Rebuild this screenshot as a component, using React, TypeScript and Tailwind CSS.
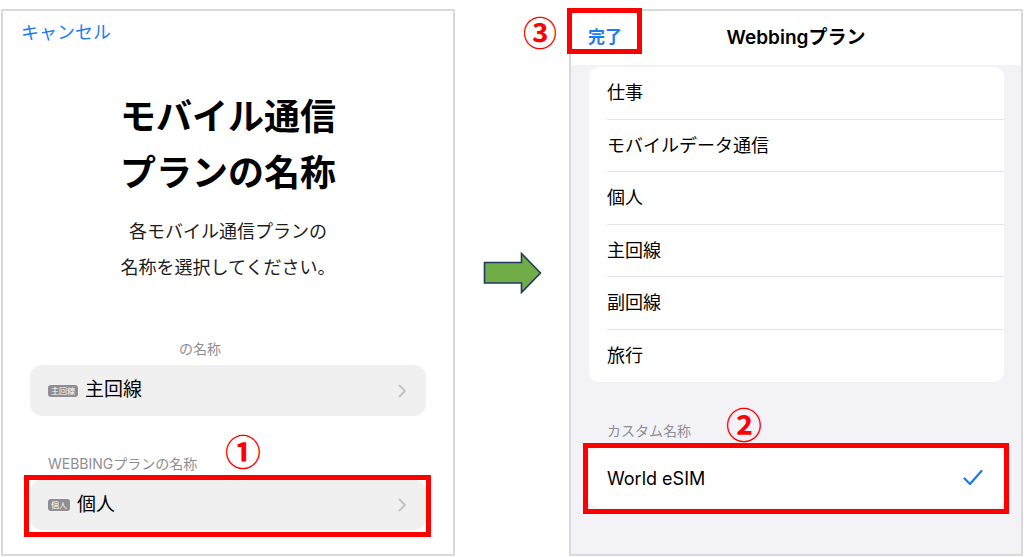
import React from "react";

const Chevron = () => (
  <svg width="9" height="14" viewBox="0 0 9 14" fill="none">
    <path d="M1.5 1.5 L7 7 L1.5 12.5" stroke="#c4c4c7" strokeWidth="2" strokeLinecap="round" strokeLinejoin="round" />
  </svg>
);

const Badge = ({ text }: { text: string }) => (
  <span className="inline-flex items-center justify-center h-[12px] px-[3px] rounded-[3px] bg-[#8e8e93] text-white text-[8px] leading-none">
    {text}
  </span>
);

const rightRows = ["仕事", "モバイルデータ通信", "個人", "主回線", "副回線", "旅行"];

export default function App() {
  return (
    <div className="relative w-[1024px] h-[557px] overflow-hidden bg-white flex pt-[9px] pl-[1px] font-['Inter','Noto_Sans_CJK_JP',sans-serif] text-black">
      {/* Left panel */}
      <div className="w-[454px] h-[547px] border-2 border-[#d9d9d9] flex flex-col bg-white">
        <div className="h-[42px] flex items-center pl-[18px] text-[18px] text-[#1b7cf4]">キャンセル</div>
        <div className="mt-[36px] text-center text-[36px] leading-[56px] font-bold">
          <div>モバイル通信</div>
          <div>プランの名称</div>
        </div>
        <div className="mt-[13px] text-center text-[18px] leading-[36px] text-[#1c1c1e]">
          <div>各モバイル通信プランの</div>
          <div>名称を選択してください。</div>
        </div>
        <div className="mt-[52px] h-[20px] flex items-center pl-[176px] text-[14px] text-[#8e8e93]">の名称</div>
        <div className="mt-[7px] mx-[27px] h-[51px] rounded-[12px] bg-[#f0f0f0] flex items-center pl-[18px] pr-[19px]">
          <Badge text="主回線" />
          <span className="ml-[7px] text-[19px]">主回線</span>
          <span className="ml-auto flex"><Chevron /></span>
        </div>
        <div className="mt-[37px] h-[20px] flex items-center pl-[45px] text-[14px] text-[#8e8e93]">WEBBINGプランの名称</div>
        <div className="mt-[7px] mx-[27px] h-[50px] rounded-[12px] bg-[#f0f0f0] flex items-center pl-[18px] pr-[19px]">
          <Badge text="個人" />
          <span className="ml-[7px] text-[19px]">個人</span>
          <span className="ml-auto flex"><Chevron /></span>
        </div>
      </div>

      {/* Arrow */}
      <div className="w-[114px] flex justify-center pt-[243px]">
        <svg width="59" height="42" viewBox="0 0 59 42">
          <polygon
            points="1.5,10.5 38.5,10.5 38.5,1.5 57.5,21 38.5,40.5 38.5,31 1.5,31"
            fill="#70ad47"
            stroke="#203864"
            strokeWidth="1.6"
            strokeLinejoin="miter"
          />
        </svg>
      </div>

      {/* Right panel */}
      <div className="w-[454px] h-[547px] border-2 border-[#d9d9d9] bg-[#f2f2f7] flex flex-col">
        <div className="h-[54px] bg-white grid grid-cols-[1fr_auto_1fr] items-center">
          <div className="pl-[17px] text-[17px] font-semibold text-[#1b7cf4]">完了</div>
          <div className="text-[19px] font-semibold">Webbingプラン</div>
          <div />
        </div>
        <div className="mt-[2px] ml-[18px] mr-[17px] rounded-[10px] bg-white flex flex-col">
          {rightRows.map((r, i) => (
            <div key={r} className="h-[52.5px] pl-[18px] flex">
              <div
                className={
                  i < rightRows.length - 1
                    ? "flex-1 flex items-center text-[18px] border-b border-[#e5e5ea]"
                    : "flex-1 flex items-center text-[18px]"
                }
              >
                {r}
              </div>
            </div>
          ))}
        </div>
        <div className="mt-[38px] h-[20px] flex items-center pl-[36px] text-[14px] text-[#8e8e93]">カスタム名称</div>
        <div className="mt-[8px] ml-[18px] mr-[17px] h-[60px] rounded-[10px] bg-white flex items-center pl-[18px] pr-[20px]">
          <span className="text-[18px]">World eSIM</span>
          <span className="ml-auto flex">
            <svg width="22" height="20" viewBox="0 0 22 20" fill="none">
              <path d="M2.5 10.5 L8 16 L19.5 3" stroke="#1b7cf4" strokeWidth="2.3" strokeLinecap="round" strokeLinejoin="round" />
            </svg>
          </span>
        </div>
      </div>

      {/* Annotations */}
      <div className="absolute left-[24px] top-[475px] w-[407px] h-[62px] border-[5px] border-[#ff0000]" />
      <div className="absolute left-[583px] top-[443px] w-[426px] h-[71px] border-[5px] border-[#ff0000]" />
      <div className="absolute left-[567px] top-[8px] w-[75px] h-[46px] border-[5px] border-[#ff0000]" />
      <span className="absolute left-[243px] top-[450px] -translate-x-1/2 -translate-y-1/2 text-[36px] leading-none font-bold text-[#ff0000] font-['Noto_Sans_CJK_JP',sans-serif]">①</span>
      <span className="absolute left-[744px] top-[423px] -translate-x-1/2 -translate-y-1/2 text-[36px] leading-none font-bold text-[#ff0000] font-['Noto_Sans_CJK_JP',sans-serif]">②</span>
      <span className="absolute left-[540px] top-[32px] -translate-x-1/2 -translate-y-1/2 text-[34px] leading-none font-bold text-[#ff0000] font-['Noto_Sans_CJK_JP',sans-serif]">③</span>
    </div>
  );
}
